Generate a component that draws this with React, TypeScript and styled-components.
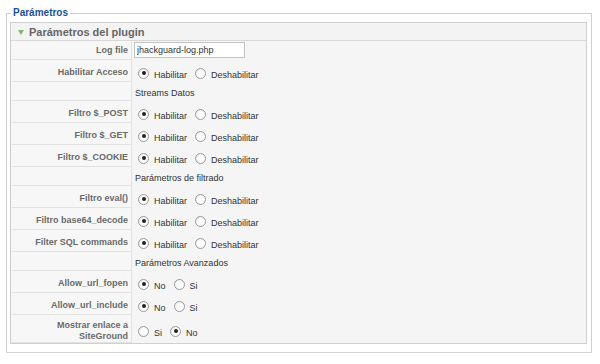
import React from "react";
import styled, { createGlobalStyle } from "styled-components";

type Choice = { label: string; checked?: boolean };

type Param =
  | { kind: "text"; label: string; value: string }
  | { kind: "radio"; label: string; choices: Choice[] }
  | { kind: "section"; title: string };

const on = (a: string, b: string): Choice[] => [{ label: a, checked: true }, { label: b }];
const off = (a: string, b: string): Choice[] => [{ label: a }, { label: b, checked: true }];

const params: Param[] = [
  { kind: "text", label: "Log file", value: "jhackguard-log.php" },
  { kind: "radio", label: "Habilitar Acceso", choices: on("Habilitar", "Deshabilitar") },
  { kind: "section", title: "Streams Datos" },
  { kind: "radio", label: "Filtro $_POST", choices: on("Habilitar", "Deshabilitar") },
  { kind: "radio", label: "Filtro $_GET", choices: on("Habilitar", "Deshabilitar") },
  { kind: "radio", label: "Filtro $_COOKIE", choices: on("Habilitar", "Deshabilitar") },
  { kind: "section", title: "Parámetros de filtrado" },
  { kind: "radio", label: "Filtro eval()", choices: on("Habilitar", "Deshabilitar") },
  { kind: "radio", label: "Filtro base64_decode", choices: on("Habilitar", "Deshabilitar") },
  { kind: "radio", label: "Filter SQL commands", choices: on("Habilitar", "Deshabilitar") },
  { kind: "section", title: "Parámetros Avanzados" },
  { kind: "radio", label: "Allow_url_fopen", choices: on("No", "Si") },
  { kind: "radio", label: "Allow_url_include", choices: on("No", "Si") },
  { kind: "radio", label: "Mostrar enlace a\nSiteGround", choices: off("Si", "No") },
];

const GlobalStyle = createGlobalStyle`
  body {
    margin: 0;
    background: #fff;
    font-family: "Liberation Sans", Arial, sans-serif;
  }
`;

const Fieldset = styled.fieldset`
  margin: 6px 8px 0 6px;
  padding: 2px 4px 8px 3px;
  border: 1px solid #d2d2d2;
`;

const Legend = styled.legend`
  padding: 0 2px;
  margin-left: 1px;
  font-size: 10px;
  line-height: 14px;
  font-weight: bold;
  color: #1d4f96;
`;

const Panel = styled.div`
  border: 1px solid #d0d0d0;
  background: #f5f5f5;
`;

const PanelHeader = styled.div`
  display: flex;
  align-items: center;
  gap: 5px;
  height: 17px;
  padding-left: 7px;
  border-bottom: 1px solid #d8d8d8;
  background: #f3f3f3;
  font-size: 11px;
  font-weight: bold;
  letter-spacing: 0;
  color: #666;
`;

const Toggle = styled.span`
  width: 0;
  height: 0;
  border-left: 3.5px solid transparent;
  border-right: 3.5px solid transparent;
  border-top: 5px solid #86b567;
  margin-top: 1px;
`;

const Row = styled.div<{ $h: number }>`
  display: grid;
  grid-template-columns: 120px 1fr;
  height: ${(p) => p.$h}px;
  padding-left: 1px;
`;

const Key = styled.div<{ $shift: number }>`
  display: flex;
  align-items: center;
  justify-content: flex-end;
  padding: ${(p) => p.$shift}px 3px 0 0;
  border-right: 1px solid #e2e2e2;
  border-bottom: 1px solid #e2e2e2;
  background: #f7f7f7;
  font-size: 9px;
  line-height: 11px;
  font-weight: bold;
  color: #6a6a6a;
  text-align: right;
  white-space: pre-line;
`;

const Value = styled.div<{ $shift: number }>`
  display: flex;
  align-items: center;
  padding: ${(p) => p.$shift}px 0 0 1px;
  font-size: 9px;
  color: #333;
`;

const SectionTitle = styled.span`
  padding-left: 2px;
`;

const TextInput = styled.input`
  box-sizing: border-box;
  width: 111px;
  height: 16px;
  margin: 0 0 1px 1px;
  padding: 0 2px;
  border: 1px solid #c4c4c4;
  background: #fff;
  font-family: "Liberation Sans", Arial, sans-serif;
  font-size: 9px;
  color: #333;
`;

const Option = styled.label`
  display: inline-flex;
  align-items: center;
  margin-left: 5px;
  margin-right: 3px;
`;

const Dot = styled.span<{ $checked?: boolean }>`
  position: relative;
  box-sizing: border-box;
  width: 11px;
  height: 11px;
  border-radius: 50%;
  border: 1px solid #9a9a9a;
  background: radial-gradient(circle at 60% 60%, #fff 40%, #e4e4e4 100%);

  &::after {
    content: "";
    display: ${(p) => (p.$checked ? "block" : "none")};
    position: absolute;
    left: 2.5px;
    top: 2.5px;
    width: 4px;
    height: 4px;
    border-radius: 50%;
    background: #222;
  }
`;

const OptionText = styled.span`
  margin-left: 5px;
  padding-top: 4px;
`;

const rowHeight = (p: Param) => {
  if (p.kind === "text") return 19;
  if (p.kind === "section") return 19;
  return p.label.includes("\n") ? 28 : 22;
};

const shift = (p: Param) => {
  if (p.kind === "text") return 0;
  if (p.kind === "section") return 2;
  return 4;
};

const ParamRow = ({ param }: { param: Param }) => {
  return (
    <Row $h={rowHeight(param)}>
      <Key $shift={shift(param)}>{param.kind === "section" ? "" : param.label}</Key>
      <Value $shift={shift(param)}>
        {param.kind === "text" && <TextInput defaultValue={param.value} />}
        {param.kind === "section" && <SectionTitle>{param.title}</SectionTitle>}
        {param.kind === "radio" &&
          param.choices.map((c) => (
            <Option key={c.label}>
              <Dot $checked={c.checked} />
              <OptionText>{c.label}</OptionText>
            </Option>
          ))}
      </Value>
    </Row>
  );
};

export default function App() {
  return (
    <>
      <GlobalStyle />
      <Fieldset>
        <Legend>Parámetros</Legend>
        <Panel>
          <PanelHeader>
            <Toggle />
            Parámetros del plugin
          </PanelHeader>
          {params.map((p, i) => (
            <ParamRow key={i} param={p} />
          ))}
        </Panel>
      </Fieldset>
    </>
  );
}
